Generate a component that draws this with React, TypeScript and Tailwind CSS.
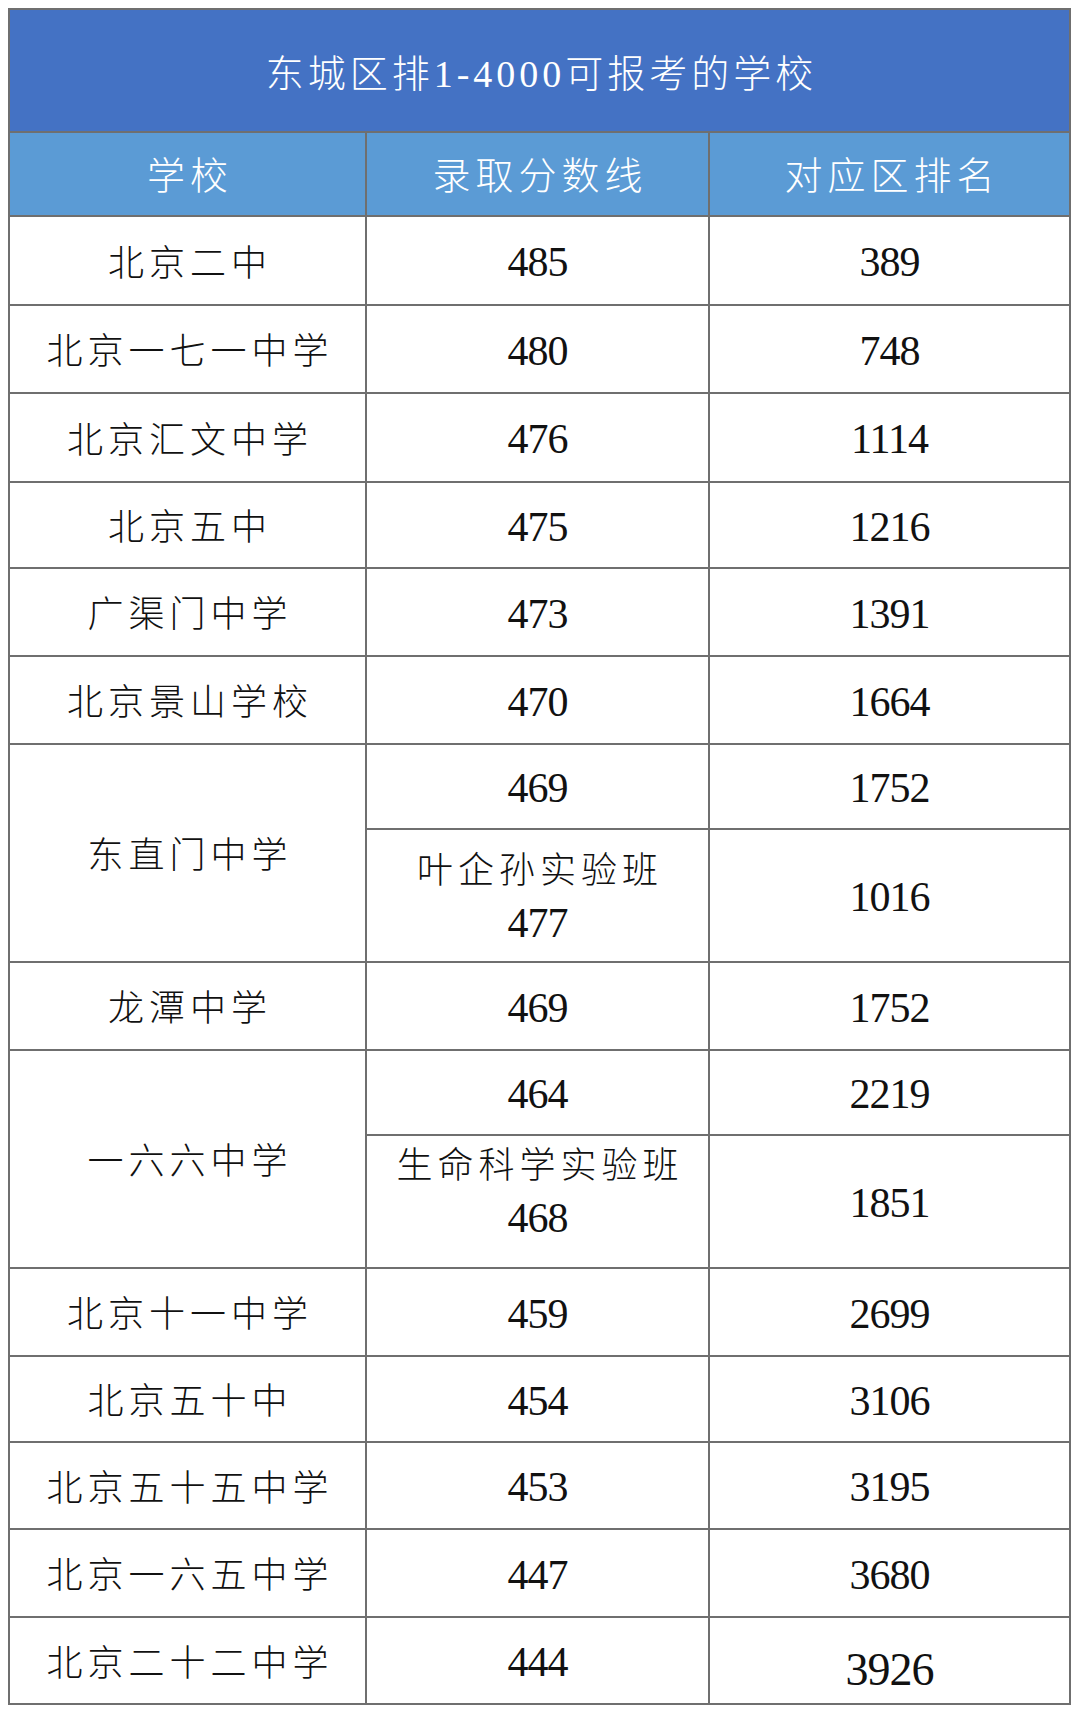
import React from "react";

type Sub = { score: string; rank: string; h: string; shift?: string };
type Row = { school: string; subs: Sub[] };

const rows: Row[] = [
  { school: "北京二中", subs: [{ score: "485", rank: "389", h: "h-[87px]" }] },
  { school: "北京一七一中学", subs: [{ score: "480", rank: "748", h: "h-[86px]" }] },
  { school: "北京汇文中学", subs: [{ score: "476", rank: "1114", h: "h-[87px]" }] },
  { school: "北京五中", subs: [{ score: "475", rank: "1216", h: "h-[84px]" }] },
  { school: "广渠门中学", subs: [{ score: "473", rank: "1391", h: "h-[86px]" }] },
  { school: "北京景山学校", subs: [{ score: "470", rank: "1664", h: "h-[86px]" }] },
  {
    school: "东直门中学",
    subs: [
      { score: "469", rank: "1752", h: "h-[83px]" },
      { score: "叶企孙实验班|477", rank: "1016", h: "h-[131px]", shift: "mt-[2px]" },
    ],
  },
  { school: "龙潭中学", subs: [{ score: "469", rank: "1752", h: "h-[86px]" }] },
  {
    school: "一六六中学",
    subs: [
      { score: "464", rank: "2219", h: "h-[83px]" },
      { score: "生命科学实验班|468", rank: "1851", h: "h-[131px]", shift: "-mt-[20px]" },
    ],
  },
  { school: "北京十一中学", subs: [{ score: "459", rank: "2699", h: "h-[86px]" }] },
  { school: "北京五十中", subs: [{ score: "454", rank: "3106", h: "h-[84px]" }] },
  { school: "北京五十五中学", subs: [{ score: "453", rank: "3195", h: "h-[85px]" }] },
  { school: "北京一六五中学", subs: [{ score: "447", rank: "3680", h: "h-[86px]" }] },
  { school: "北京二十二中学", subs: [{ score: "444", rank: "3926", h: "h-[85px]" }] },
];

const font = "font-['Liberation_Serif','Noto_Sans_CJK_SC',serif]";

function ScoreText({ sub }: { sub: Sub }) {
  if (sub.score.includes("|")) {
    const [label, num] = sub.score.split("|");
    return (
      <div className={`flex flex-col items-center leading-[52px] ${sub.shift ?? ""}`}>
        <span className="text-[36px] tracking-[5px] pl-[5px] font-light">{label}</span>
        <span className="text-[42px] tracking-[-1px]">{num}</span>
      </div>
    );
  }
  return <span className="text-[42px] tracking-[-1px] pt-[4px]">{sub.score}</span>;
}

export default function App() {
  return (
    <div className={`w-[1080px] h-[1714px] bg-white pt-[8px] pl-[8px] ${font} text-[#111]`}>
      <div className="w-[1063px] grid grid-cols-[355px_341px_359px] gap-[2px] p-[2px] bg-[#6f6f6f]">
        {/* Title */}
        <div className="col-span-3 h-[121px] bg-[#4472c4] flex items-center justify-center text-white text-[38px] tracking-[4px] font-light pl-[4px] pt-[8px]">
          东城区排1-4000可报考的学校
        </div>

        {/* Header */}
        {["学校", "录取分数线", "对应区排名"].map((h) => (
          <div
            key={h}
            className="h-[82px] bg-[#5b9bd5] flex items-center justify-center text-white text-[38px] tracking-[5px] pl-[5px] pt-[5px] font-light"
          >
            {h}
          </div>
        ))}

        {/* Body */}
        {rows.map((row) => (
          <React.Fragment key={row.school + row.subs[0].score}>
            <div
              className={`bg-white flex items-center justify-center text-[36px] tracking-[5px] pl-[5px] pt-[6px] font-light ${
                row.subs.length === 2 ? "row-span-2" : ""
              }`}
            >
              {row.school}
            </div>
            {row.subs.map((s, i) => (
              <React.Fragment key={i}>
                <div className={`${s.h} bg-white flex items-center justify-center`}>
                  <ScoreText sub={s} />
                </div>
                <div className={`${s.h} bg-white flex items-center justify-center`}>
                  {s.rank === "3926" ? (
                    <span className="text-[46px] tracking-[-1px] pt-[18px]">{s.rank}</span>
                  ) : (
                    <span className="text-[42px] tracking-[-1px] pt-[4px]">{s.rank}</span>
                  )}
                </div>
              </React.Fragment>
            ))}
          </React.Fragment>
        ))}
      </div>
    </div>
  );
}
